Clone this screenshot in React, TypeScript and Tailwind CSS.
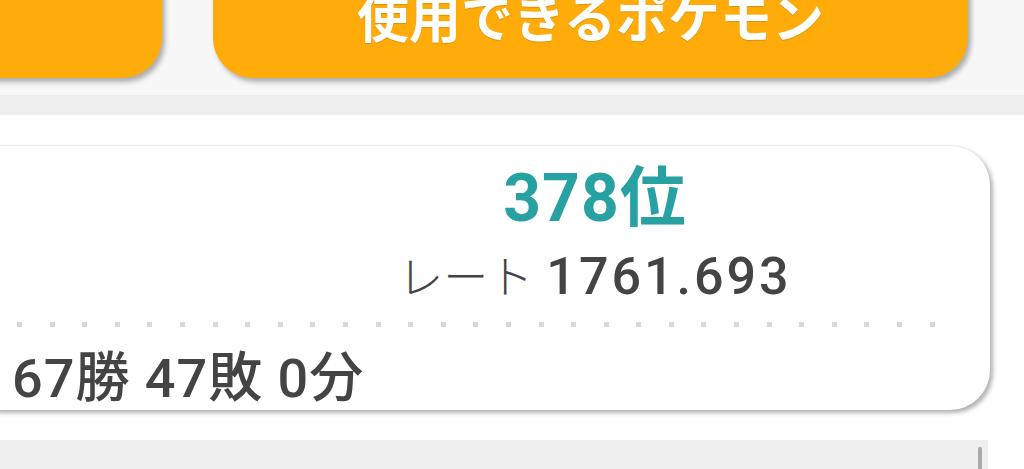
import React from 'react';

// 対戦成績カード（ランクバトル）
const FONT = "font-['Roboto','Noto_Sans_CJK_JP',sans-serif]";

const dots = Array.from({ length: 29 }, (_, i) => i);

function TopButtons() {
  return (
    <div className="h-[95px] bg-[#f7f7f7] flex items-start overflow-hidden">
      <div className="mt-[-60px] ml-[-60px] w-[222px] h-[138px] shrink-0 rounded-[40px] bg-[#ffab0a] shadow-[3px_4px_5px_rgba(0,0,0,0.3)]" />
      <div className="mt-[-60px] ml-[51px] w-[755px] h-[138px] shrink-0 rounded-[40px] bg-[#ffab0a] shadow-[3px_4px_5px_rgba(0,0,0,0.3)] flex flex-col justify-end items-center pb-[31px]">
        <span className={`${FONT} text-[52px] leading-none font-semibold text-white [text-shadow:0_1px_1px_rgba(0,0,0,0.15)]`}>
          使用できるポケモン
        </span>
      </div>
    </div>
  );
}

function RecordCard() {
  return (
    <div className="ml-[-40px] w-[1030px] h-[265px] rounded-[40px] bg-white border-t border-[#ececec] shadow-[3px_3px_4px_rgba(0,0,0,0.3)] flex flex-col pt-[20px]">
      <div className="ml-[435px] w-[400px] flex flex-col items-center">
        <div className={`${FONT} h-[66px] text-[66px] leading-none font-bold text-[#27a1a1] tracking-[1px]`}>
          378位
        </div>
        <div className={`${FONT} mt-[19px] h-[52px] flex items-baseline text-[#444]`}>
          <span className="text-[45px] leading-none font-light">レート</span>
          <span className="ml-[13px] text-[52px] leading-none font-medium tracking-[3px]">1761.693</span>
        </div>
      </div>
      <div className="mt-[19px] ml-[57px] w-[918px] flex justify-between">
        {dots.map((i) => (
          <span key={i} className="w-[5px] h-[5px] bg-[#d9d9d9]" />
        ))}
      </div>
      <div className={`${FONT} mt-[25px] pl-[52px] h-[54px] text-[54px] leading-none font-medium text-[#444] tracking-[1px]`}>
        67勝 47敗 0分
      </div>
    </div>
  );
}

export default function App() {
  return (
    <div className="w-[1024px] h-[469px] overflow-hidden bg-white">
      <TopButtons />
      <div className="h-[20px] bg-[#efefef]" />
      <div className="pt-[30px]">
        <RecordCard />
      </div>
      <div className="mt-[30px] w-[988px] h-[40px] bg-[#efefef] flex justify-end pr-[6px] pt-[7px]">
        <div className="w-[4px] h-[40px] rounded-full bg-[#a8a8a8]" />
      </div>
    </div>
  );
}
